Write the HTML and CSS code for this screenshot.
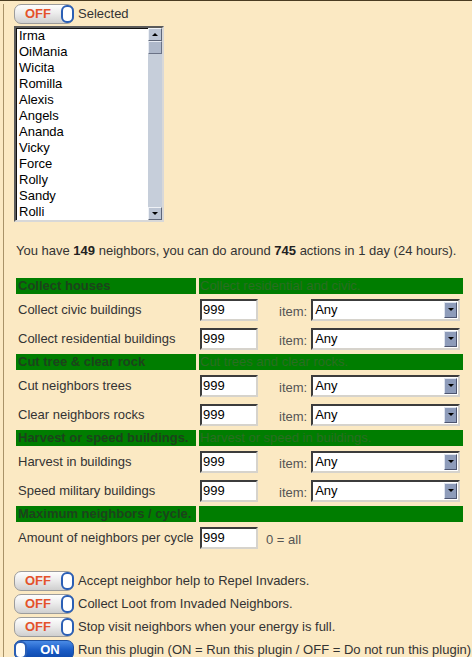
FILE: index.html
```html
<!DOCTYPE html>
<html>
<head>
<meta charset="utf-8">
<title>Neighbors</title>
<link rel="stylesheet" href="styles.css">
</head>
<body>
<div class="page">
  <div class="panel">
    <div class="sel-row">
      <span class="toggle off"><span class="tl">OFF</span><span class="knob"></span></span>
      <span class="flag-label">Selected</span>
    </div>

    <div class="listbox">
      <ul class="items">
        <li>Irma</li>
        <li>OiMania</li>
        <li>Wicita</li>
        <li>Romilla</li>
        <li>Alexis</li>
        <li>Angels</li>
        <li>Ananda</li>
        <li>Vicky</li>
        <li>Force</li>
        <li>Rolly</li>
        <li>Sandy</li>
        <li>Rolli</li>
      </ul>
      <div class="sb">
        <div class="sb-btn"><span class="tri up"></span></div>
        <div class="sb-thumb"></div>
        <div class="sb-track"></div>
        <div class="sb-btn"><span class="tri down"></span></div>
      </div>
    </div>

    <p class="summary">You have <b>149</b> neighbors, you can do around <b>745</b> actions in 1 day (24 hours).</p>

    <div class="opts">
      <div class="hd hd-l">Collect houses</div>
      <div class="hd hd-r">Collect residential and civic.</div>
      <div class="lbl">Collect civic buildings</div>
      <div class="ctl"><input class="num" type="text" value="999"><span class="item">item:</span><span class="dd"><span class="dd-val">Any</span><span class="dd-btn"><span class="tri down"></span></span></span></div>
      <div class="lbl">Collect residential buildings</div>
      <div class="ctl"><input class="num" type="text" value="999"><span class="item">item:</span><span class="dd"><span class="dd-val">Any</span><span class="dd-btn"><span class="tri down"></span></span></span></div>

      <div class="hd hd-l">Cut tree &amp; clear rock</div>
      <div class="hd hd-r">Cut trees and clear rocks.</div>
      <div class="lbl">Cut neighbors trees</div>
      <div class="ctl"><input class="num" type="text" value="999"><span class="item">item:</span><span class="dd"><span class="dd-val">Any</span><span class="dd-btn"><span class="tri down"></span></span></span></div>
      <div class="lbl">Clear neighbors rocks</div>
      <div class="ctl"><input class="num" type="text" value="999"><span class="item">item:</span><span class="dd"><span class="dd-val">Any</span><span class="dd-btn"><span class="tri down"></span></span></span></div>

      <div class="hd hd-l">Harvest or speed buildings.</div>
      <div class="hd hd-r">Harvest or speed in buildings.</div>
      <div class="lbl">Harvest in buildings</div>
      <div class="ctl"><input class="num" type="text" value="999"><span class="item">item:</span><span class="dd"><span class="dd-val">Any</span><span class="dd-btn"><span class="tri down"></span></span></span></div>
      <div class="lbl">Speed military buildings</div>
      <div class="ctl"><input class="num" type="text" value="999"><span class="item">item:</span><span class="dd"><span class="dd-val">Any</span><span class="dd-btn"><span class="tri down"></span></span></span></div>

      <div class="hd hd-l">Maximum neighbors / cycle.</div>
      <div class="hd hd-r"></div>
      <div class="lbl">Amount of neighbors per cycle</div>
      <div class="ctl"><input class="num" type="text" value="999"><span class="hint">0 = all</span></div>
    </div>

    <div class="flags">
      <div class="flag"><span class="toggle off"><span class="tl">OFF</span><span class="knob"></span></span><span class="flag-label">Accept neighbor help to Repel Invaders.</span></div>
      <div class="flag"><span class="toggle off"><span class="tl">OFF</span><span class="knob"></span></span><span class="flag-label">Collect Loot from Invaded Neighbors.</span></div>
      <div class="flag"><span class="toggle off"><span class="tl">OFF</span><span class="knob"></span></span><span class="flag-label">Stop visit neighbors when your energy is full.</span></div>
      <div class="flag"><span class="toggle on"><span class="knob"></span><span class="tl">ON</span></span><span class="flag-label">Run this plugin (ON = Run this plugin / OFF = Do not run this plugin)</span></div>
    </div>
  </div>
</div>
</body>
</html>
```

FILE: styles.css
```css
html {
  background: #ffffff;
}

body {
  margin: 0;
  font-family: "Liberation Sans", Arial, sans-serif;
  font-size: 13px;
  color: #333333;
}

.page {
  height: 657px;
  box-sizing: border-box;
  background: #fbe9c3;
  border-top: 1px solid #4a3c22;
  padding-left: 3px;
  overflow: hidden;
}

.panel {
  height: 100%;
  border-left: 1px solid #a89268;
  padding-left: 10px;
  white-space: nowrap;
}

/* toggles */
.toggle {
  display: inline-flex;
  align-items: center;
  width: 60px;
  height: 20px;
  box-sizing: border-box;
  border: 1px solid #9c9c9c;
  border-radius: 7px;
  flex: none;
}

.toggle.off {
  background: linear-gradient(#fefefe, #ececec 45%, #cfcfcf);
}

.toggle.on {
  background: linear-gradient(#4a8be6, #1a5cc6 50%, #0d47aa);
  border-color: #1b4d9e;
}

.tl {
  flex: 1;
  text-align: center;
  font-weight: bold;
  font-size: 13px;
  line-height: 18px;
}

.off .tl {
  color: #e4532b;
}

.on .tl {
  color: #ffffff;
}

.knob {
  width: 13px;
  height: 18px;
  box-sizing: border-box;
  background: #ffffff;
  border: 2px solid #2b5fb5;
  border-radius: 6px;
  margin-right: -1px;
}

.on .knob {
  margin-right: 0;
  margin-left: -1px;
}

.sel-row {
  display: flex;
  align-items: center;
  gap: 4px;
  margin-top: 3px;
}

.flag-label {
  color: #333333;
  line-height: 20px;
}

/* listbox */
.listbox {
  display: flex;
  width: 150px;
  height: 196px;
  box-sizing: border-box;
  margin-top: 2px;
  background: #ffffff;
  border: 2px solid;
  border-color: #5a5a5a #d8d8d8 #d8d8d8 #5a5a5a;
  box-shadow: inset 1px 1px 0 #101010;
}

.items {
  list-style: none;
  margin: 0;
  padding: 0 0 0 3px;
  flex: 1;
  overflow: hidden;
}

.items li {
  height: 16px;
  line-height: 16px;
  color: #000000;
}

.sb {
  width: 14px;
  display: flex;
  flex-direction: column;
  background: #c6ceda;
}

.sb-btn {
  height: 13px;
  box-sizing: border-box;
  background: #bcc5d4;
  border: 1px solid;
  border-color: #eef1f6 #5e6678 #5e6678 #eef1f6;
  display: flex;
  align-items: center;
  justify-content: center;
}

.sb-thumb {
  height: 13px;
  box-sizing: border-box;
  background: #aeb8ca;
  border: 1px solid;
  border-color: #e6eaf2 #6a7286 #6a7286 #e6eaf2;
}

.sb-track {
  flex: 1;
}

.tri {
  width: 0;
  height: 0;
  border-left: 3px solid transparent;
  border-right: 3px solid transparent;
}

.tri.up {
  border-bottom: 3px solid #000000;
}

.tri.down {
  border-top: 3px solid #000000;
}

/* summary */
.summary {
  margin: 21px 0 0 2px;
  line-height: 16px;
  color: #333333;
}

.summary b {
  color: #222222;
}

/* options grid */
.opts {
  display: grid;
  grid-template-columns: 180px 264px;
  column-gap: 3px;
  row-gap: 2px;
  margin: 19px 0 0 2px;
}

.hd {
  height: 16px;
  line-height: 16px;
  background: #007d00;
  overflow: hidden;
}

.hd-l {
  font-weight: bold;
  color: #1c431c;
  padding-left: 2px;
}

.hd-r {
  color: #2a6e22;
  padding-left: 1px;
}

.lbl {
  height: 27px;
  display: flex;
  align-items: center;
  padding-left: 2px;
  color: #333333;
}

.ctl {
  height: 27px;
  display: flex;
  align-items: center;
  padding-left: 1px;
}

.num {
  width: 58px;
  height: 22px;
  box-sizing: border-box;
  margin: 0;
  padding: 0 0 0 1px;
  font-family: "Liberation Sans", Arial, sans-serif;
  font-size: 13px;
  color: #000000;
  background: #ffffff;
  border: 2px solid;
  border-color: #3c3c3c #d6d3cc #d6d3cc #3c3c3c;
  outline: none;
}

.item {
  margin: 3px 4px 0 21px;
  color: #555555;
}

.hint {
  margin: 3px 0 0 8px;
  color: #555555;
}

.dd {
  display: flex;
  align-items: center;
  width: 149px;
  height: 22px;
  box-sizing: border-box;
  background: #ffffff;
  border: 2px solid;
  border-color: #3c3c3c #d6d3cc #d6d3cc #3c3c3c;
}

.dd-val {
  flex: 1;
  padding-left: 2px;
  color: #000000;
}

.dd-btn {
  width: 13px;
  height: 16px;
  box-sizing: border-box;
  margin-right: 1px;
  background: #8e9cba;
  border: 1px solid;
  border-color: #dfe4ee #4d5570 #4d5570 #dfe4ee;
  display: flex;
  align-items: center;
  justify-content: center;
}

/* flags */
.flags {
  display: flex;
  flex-direction: column;
  gap: 3px;
  margin-top: 20px;
}

.flag {
  display: flex;
  align-items: center;
  gap: 4px;
}
```
